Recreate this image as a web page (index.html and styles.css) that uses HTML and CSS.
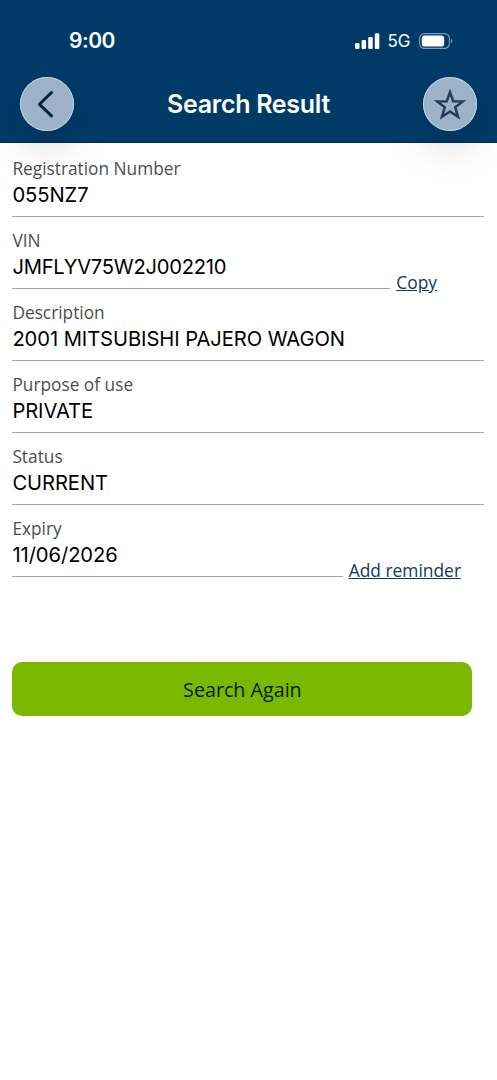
FILE: index.html
```html
<!DOCTYPE html>
<html lang="en">
<head>
<meta charset="utf-8">
<title>Search Result</title>
<link rel="stylesheet" href="styles.css">
</head>
<body>
<header class="header">
  <div class="status-bar">
    <span class="time">9:00</span>
    <div class="indicators">
      <svg class="signal" width="25" height="16" viewBox="0 0 25 16" fill="#fff">
        <rect x="0" y="10" width="4.5" height="6" rx="1.3"/>
        <rect x="6.6" y="7" width="4.5" height="9" rx="1.3"/>
        <rect x="13.2" y="4" width="4.5" height="12" rx="1.3"/>
        <rect x="19.8" y="0.3" width="4.5" height="15.7" rx="1.3"/>
      </svg>
      <span class="network">5G</span>
      <svg class="battery" width="34" height="16" viewBox="0 0 34 16">
        <rect x="0.6" y="0.6" width="29.8" height="14.8" rx="4.8" fill="none" stroke="#7f9db4" stroke-width="1.1"/>
        <rect x="2.8" y="2.4" width="22.4" height="11.2" rx="3.2" fill="#fff"/>
        <path d="M32 5.5c1.7 1 1.7 4 0 5z" fill="#7f9db4"/>
      </svg>
    </div>
  </div>
  <nav class="nav">
    <button class="round" aria-label="Back">
      <svg width="54" height="54" viewBox="0 0 54 54" fill="none" stroke="#0b2138" stroke-width="3" stroke-linecap="round" stroke-linejoin="round"><path d="M31.5 15.5 19.5 27.3l12 11.5"/></svg>
    </button>
    <h1 class="title">Search Result</h1>
    <button class="round" aria-label="Favourite">
      <svg width="54" height="54" viewBox="0 0 54 54" fill="none" stroke="#263e55" stroke-width="2.5"><path d="M27 15.2l3.2 9 9.6.2-7.6 5.8 2.8 9.6-8-5.4-8 5.4 2.8-9.6-7.6-5.8 9.6-.2z"/></svg>
    </button>
  </nav>
</header>
<main class="content">
  <div class="row"><div class="field"><div class="label">Registration Number</div><div class="value">055NZ7</div></div></div>
  <div class="row row-copy"><div class="field"><div class="label">VIN</div><div class="value vin">JMFLYV75W2J002210</div></div><a class="link">Copy</a></div>
  <div class="row"><div class="field"><div class="label">Description</div><div class="value">2001 MITSUBISHI PAJERO WAGON</div></div></div>
  <div class="row"><div class="field"><div class="label">Purpose of use</div><div class="value">PRIVATE</div></div></div>
  <div class="row"><div class="field"><div class="label">Status</div><div class="value">CURRENT</div></div></div>
  <div class="row row-reminder"><div class="field"><div class="label">Expiry</div><div class="value">11/06/2026</div></div><a class="link">Add reminder</a></div>
  <button class="again">Search Again</button>
</main>
</body>
</html>
```
FILE: styles.css
```css
* { box-sizing: border-box; }
body { margin: 0; background: #fff; color: #000; font-family: "Open Sans", sans-serif; }
button { border: 0; padding: 0; font: inherit; color: inherit; }
svg { display: block; }
.header { height: 143px; background: #003b68; color: #fff; border-bottom: 1px solid #002b55; font-family: Inter, sans-serif; }
.status-bar { height: 77px; padding: 5px 44px 0 69px; display: flex; justify-content: space-between; align-items: center; }
.time { font-size: 21px; font-weight: 600; line-height: 24px; letter-spacing: -0.5px; }
.indicators { display: flex; align-items: center; }
.network { margin: 0 8.5px 0 7px; font-size: 17px; font-weight: 400; line-height: 20px; }
.nav { display: flex; justify-content: space-between; align-items: center; padding: 0 20px; }
.round { width: 54px; height: 54px; border-radius: 50%; background: #9db2c6; box-shadow: inset 0 0 0 1px #b4d3e9, 0 14px 42px rgba(0, 0, 0, .17); }
.title { margin: 0; font-size: 25px; font-weight: 600; line-height: 30px; letter-spacing: -0.3px; }
.content { padding: 2px 13px 0 12.4px; }
.row { display: flex; height: 72px; }
.row-copy { padding-right: 47px; gap: 6px; }
.row-reminder { padding-right: 23px; gap: 6px; }
.field { flex: 1; border-bottom: 1px solid #a3a3a5; padding-top: 12px; }
.label { font-size: 17.3px; line-height: 24px; color: #4e4e50; }
.value { font-family: Inter, sans-serif; font-size: 20.2px; line-height: 24px; margin-top: 2px; white-space: nowrap; letter-spacing: -0.08px; }
.vin { letter-spacing: -0.26px; }
.link { align-self: flex-end; font-size: 17.4px; line-height: 24px; color: #12395c; text-decoration: underline; position: relative; top: 5px; }
.again { display: block; width: 460px; height: 54px; margin-top: 85px; border-radius: 10px; background: #7ab800; color: #071b0c; font-size: 19.7px; }
```
